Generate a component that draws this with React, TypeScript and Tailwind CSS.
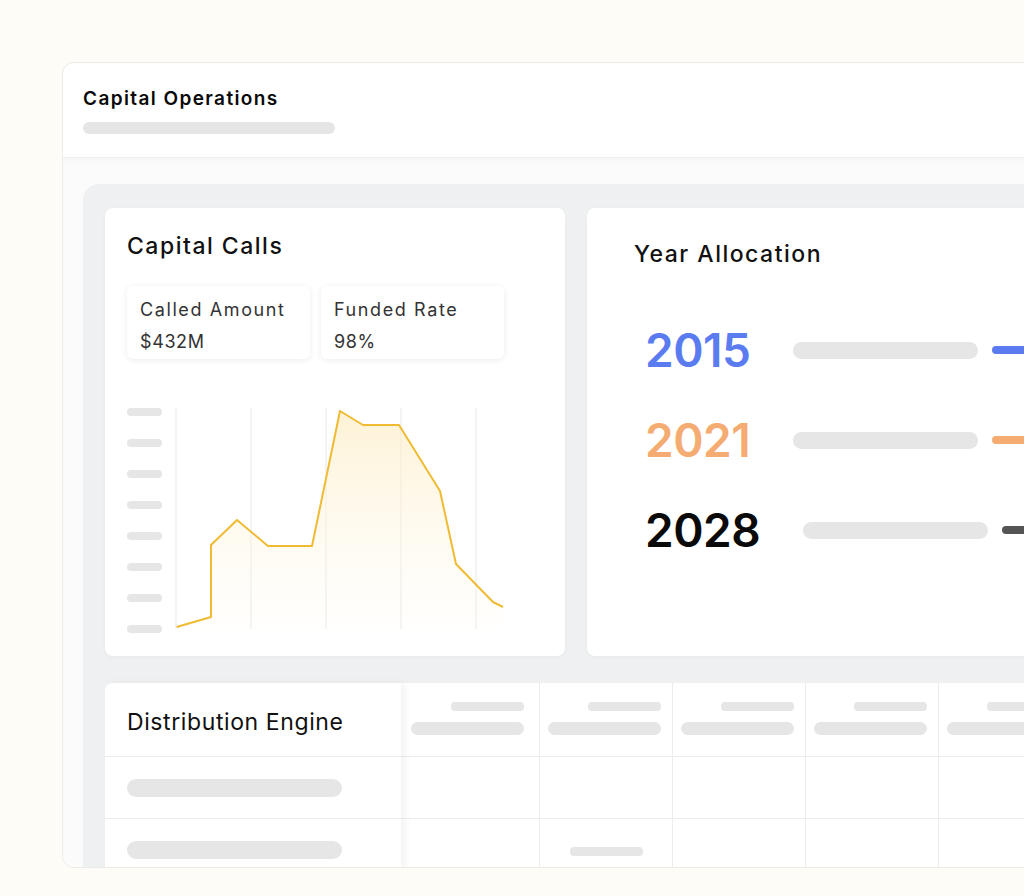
import React from 'react';

const font = { fontFamily: 'Inter, "Noto Sans", sans-serif' };

const linePoints: [number, number][] = [
  [14.7, 226], [49, 216], [49, 144], [75, 119], [106, 145], [150, 145],
  [178, 10], [201, 24], [237, 24], [278, 90], [294, 163], [331, 201], [341, 206],
];

function Pill({ className }: { className: string }) {
  return <div className={`rounded-full bg-[#e6e6e6] ${className}`} />;
}

function CapitalCalls() {
  const pts = linePoints.map(([x, y]) => `${x},${y}`).join(' ');
  const area = `${pts} 341,228 14.7,228`;
  return (
    <div className="w-[460px] h-[448px] shrink-0 rounded-lg bg-white shadow-[0_1px_4px_rgba(0,0,0,0.04)] pl-[22px] pt-[23px]">
      <h2 className="text-[23px] leading-[30px] font-medium tracking-[1.5px] text-[#111]">Capital Calls</h2>
      <div className="mt-[25px] flex gap-[11px]">
        {[
          ['Called Amount', '$432M'],
          ['Funded Rate', '98%'],
        ].map(([label, value]) => (
          <div
            key={label}
            className="w-[183px] h-[73px] rounded-md bg-white shadow-[0_1px_6px_rgba(0,0,0,0.08)] pl-[13px] pt-[12px] text-[#333]"
          >
            <div className="text-[18px] leading-[24px] tracking-[1.6px]">{label}</div>
            <div className="text-[18px] leading-[24px] tracking-[0.6px] mt-[8px]">{value}</div>
          </div>
        ))}
      </div>
      <div className="mt-[42px] flex h-[235px]">
        <div className="w-[35px] shrink-0 flex flex-col justify-between pt-[7px] pb-[3px]">
          {Array.from({ length: 8 }).map((_, i) => (
            <Pill key={i} className="h-[8px] w-[35px]" />
          ))}
        </div>
        <svg width="350" height="235" viewBox="0 0 350 235">
          <defs>
            <linearGradient id="fillGrad" x1="0" y1="0" x2="0" y2="1">
              <stop offset="0%" stopColor="#fdedc4" stopOpacity="0.7" />
              <stop offset="100%" stopColor="#fff8e6" stopOpacity="0.1" />
            </linearGradient>
          </defs>
          {[14, 89, 164, 239, 314].map((x) => (
            <line key={x} x1={x} y1={7} x2={x} y2={228} stroke="#ececec" strokeWidth="1.2" />
          ))}
          <polygon points={area} fill="url(#fillGrad)" />
          <polyline points={pts} fill="none" stroke="#f0bb33" strokeWidth="2" strokeLinejoin="round" />
        </svg>
      </div>
    </div>
  );
}

function YearAllocation() {
  const rows = [
    { year: '2015', color: 'text-[#5b7cf0]', bar: 'bg-[#5b7cf0]' },
    { year: '2021', color: 'text-[#f4ac72]', bar: 'bg-[#f4ac72]' },
    { year: '2028', color: 'text-[#0a0a0a]', bar: 'bg-[#555555]' },
  ];
  return (
    <div className="w-[520px] h-[448px] shrink-0 rounded-l-lg bg-white shadow-[0_1px_4px_rgba(0,0,0,0.04)] pl-[47px]">
      <h2 className="pt-[31px] text-[23px] leading-[30px] font-medium tracking-[1.5px] text-[#111]">Year Allocation</h2>
      <div className="mt-[51px] pl-[11px] flex flex-col gap-[30px]">
        {rows.map((r) => (
          <div key={r.year} className="flex items-center h-[60px]">
            <span className={`text-[46px] leading-[60px] font-semibold tracking-[-0.5px] ${r.color}`}>{r.year}</span>
            <Pill className="ml-[43px] h-[17px] w-[185px]" />
            <div className={`ml-[14px] h-[8px] w-[40px] rounded-full ${r.bar}`} />
          </div>
        ))}
      </div>
    </div>
  );
}

function DistributionEngine() {
  const cols = [139, 133, 133, 133, 133];
  return (
    <div className="mt-[27px] flex h-[200px] bg-white rounded-tl-lg">
      <div className="w-[296px] shrink-0 rounded-tl-lg bg-white shadow-[4px_0_8px_rgba(0,0,0,0.05)] relative z-10">
        <div className="h-[74px] border-b border-[#ececec] pl-[22px] pt-[4px] flex items-center">
          <span className="text-[23px] leading-[30px] tracking-[0.6px] text-[#111]">Distribution Engine</span>
        </div>
        <div className="h-[62px] border-b border-[#ececec] pl-[22px] flex items-center">
          <Pill className="h-[18px] w-[215px]" />
        </div>
        <div className="h-[62px] pl-[22px] flex items-center">
          <Pill className="h-[18px] w-[215px]" />
        </div>
      </div>
      {cols.map((w, i) => (
        <div key={i} className="shrink-0 border-r border-[#ececec]" style={{ width: w }}>
          <div className={`h-[74px] border-b border-[#ececec] flex flex-col items-end pt-[19px] ${i === 0 ? 'pr-[15px]' : 'pr-[11px]'}`}>
            <div className="h-[9px] w-[73px] rounded-sm bg-[#e6e6e6]" />
            <div className="mt-[11px] h-[13px] w-[113px] rounded-full bg-[#e6e6e6]" />
          </div>
          <div className="h-[62px] border-b border-[#ececec]" />
          <div className="h-[62px] flex items-start justify-center pt-[28px]">
            {i === 1 && <div className="h-[9px] w-[73px] rounded-sm bg-[#e6e6e6]" />}
          </div>
        </div>
      ))}
    </div>
  );
}

export default function App() {
  return (
    <div className="w-[1024px] h-[896px] overflow-hidden bg-[#fdfcf6] pt-[62px] pl-[62px]" style={font}>
      <div className="w-[1020px] h-[806px] rounded-xl border border-[#ecebe6] bg-white overflow-hidden flex flex-col">
        <header className="h-[95px] shrink-0 pl-[20px] pt-[24px] border-b border-[#efefef] shadow-[0_2px_6px_rgba(0,0,0,0.03)] relative z-10">
          <h1 className="text-[19px] leading-[24px] font-semibold tracking-[1.4px] text-[#0a0a0a]">Capital Operations</h1>
          <Pill className="mt-[11px] h-[12px] w-[252px]" />
        </header>
        <main className="flex-1 bg-[#fbfbfb] pl-[20px] pt-[26px]">
          <div className="h-[700px] rounded-tl-2xl bg-[#eff0f1] pl-[22px] pt-[24px]">
            <div className="flex gap-[22px]">
              <CapitalCalls />
              <YearAllocation />
            </div>
            <DistributionEngine />
          </div>
        </main>
      </div>
    </div>
  );
}
